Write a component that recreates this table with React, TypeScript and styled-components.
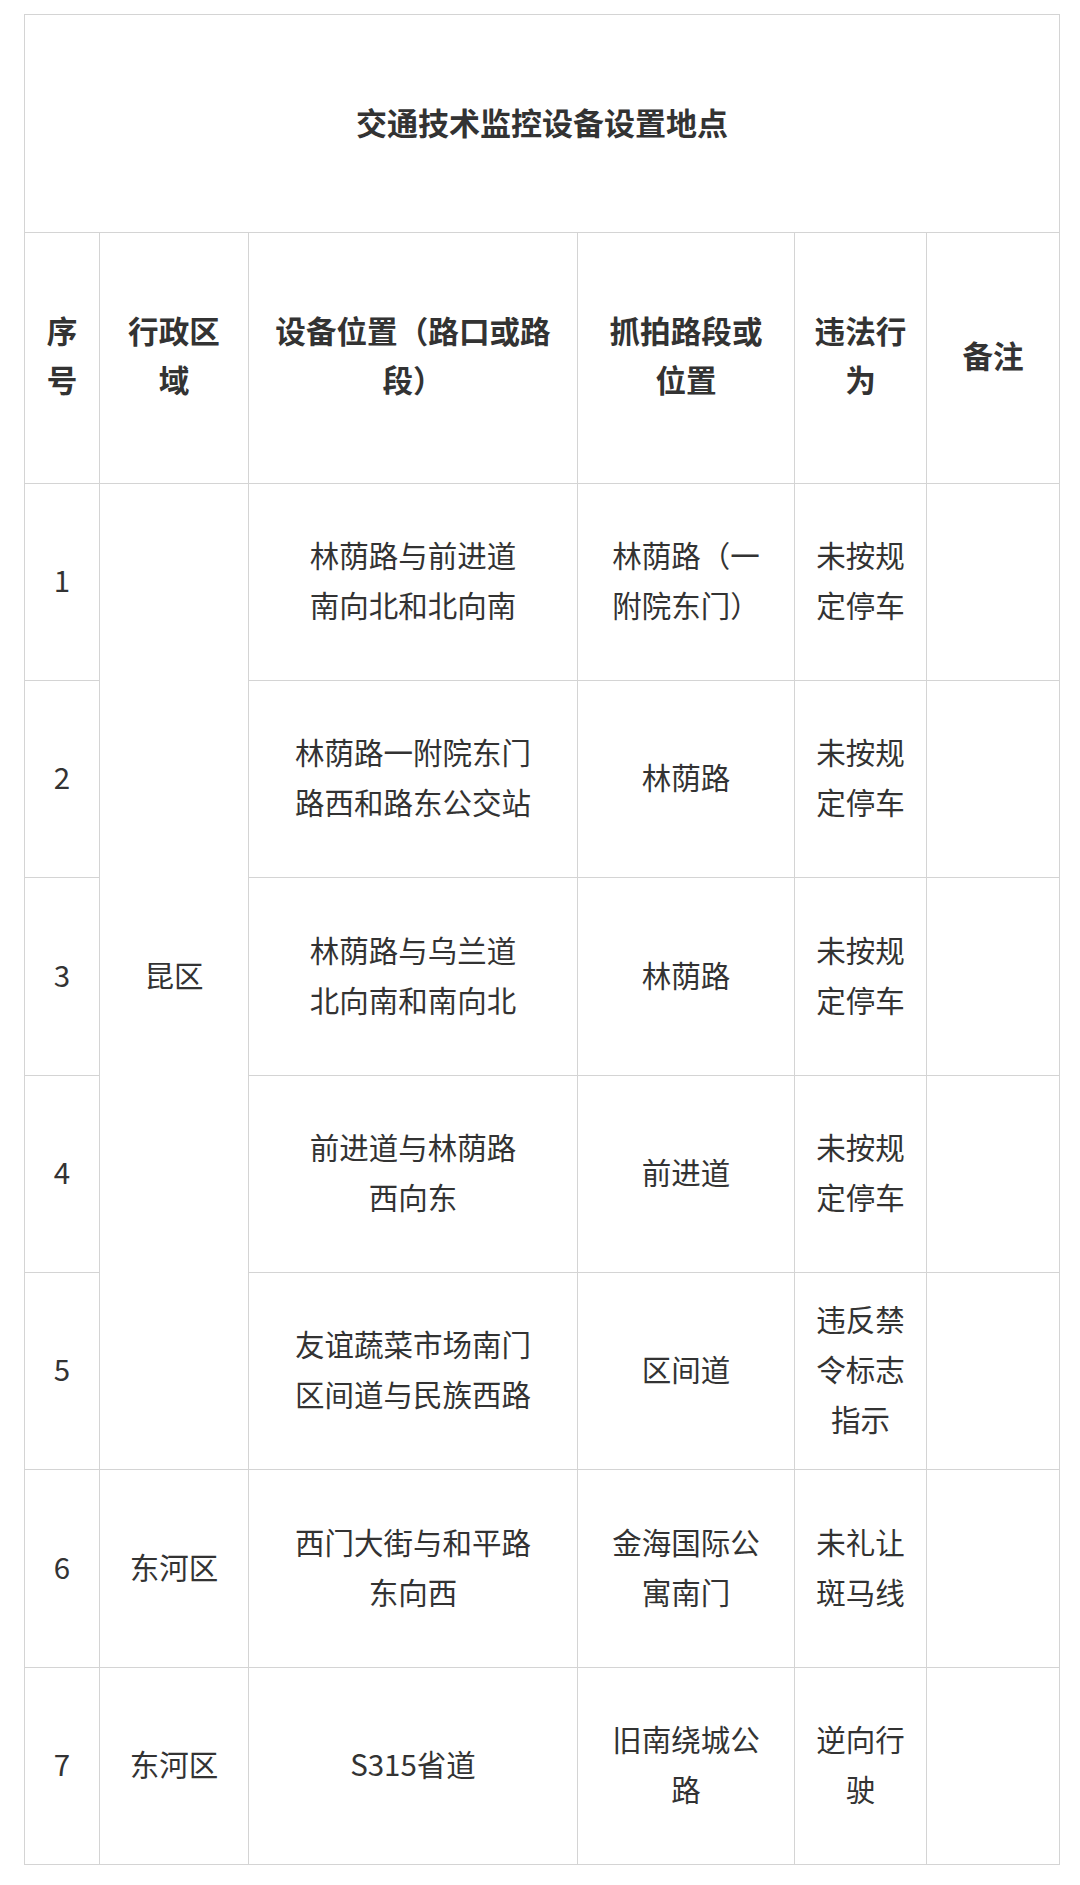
import React from 'react';
import styled, { createGlobalStyle } from 'styled-components';

const GlobalStyle = createGlobalStyle`
  html,
  body {
    margin: 0;
    padding: 0;
    background: #fff;
  }
  body {
    font-family: 'Noto Sans CJK SC', 'Noto Sans', sans-serif;
    color: #333;
  }
`;

const Page = styled.div`
  padding: 14px 0 20px 24px;
`;

const Sheet = styled.div`
  display: grid;
  box-sizing: border-box;
  width: 1036px;
  grid-template-columns: 74px 148px 328px 216px 131px 132px;
  grid-template-rows: 217px 250px 196px 196px 197px 196px 196px 197px 196px;
  gap: 1px;
  padding: 1px;
  background: #d4d4d4;
`;

const TitleCell = styled.div`
  grid-column: 1 / -1;
  background: #fff;
  display: flex;
  align-items: center;
  justify-content: center;
  padding-bottom: 4px;
  font-size: 31px;
  font-weight: 700;
  color: #333;
`;

const Cell = styled.div<{ $col: number; $span?: number }>`
  grid-column: ${(p) => p.$col};
  grid-row: span ${(p) => p.$span ?? 1};
  box-sizing: border-box;
  background: #fff;
  display: flex;
  align-items: center;
  justify-content: center;
  padding-bottom: 6px;
  text-align: center;
  white-space: nowrap;
  font-size: 29.5px;
  line-height: 50px;
  color: #333;
`;

const HeadCell = styled(Cell)`
  font-size: 30.6px;
  font-weight: 700;
  line-height: 49px;
`;

type Row = {
  no: string;
  area?: string;
  loc: string[];
  spot: string[];
  act: string[];
};

const headers = [['序', '号'], ['行政区', '域'], ['设备位置（路口或路', '段）'], ['抓拍路段或', '位置'], ['违法行', '为'], ['备注']];

const rows: Row[] = [
  { no: '1', loc: ['林荫路与前进道', '南向北和北向南'], spot: ['林荫路（一', '附院东门）'], act: ['未按规', '定停车'] },
  { no: '2', loc: ['林荫路一附院东门', '路西和路东公交站'], spot: ['林荫路'], act: ['未按规', '定停车'] },
  { no: '3', loc: ['林荫路与乌兰道', '北向南和南向北'], spot: ['林荫路'], act: ['未按规', '定停车'] },
  { no: '4', loc: ['前进道与林荫路', '西向东'], spot: ['前进道'], act: ['未按规', '定停车'] },
  { no: '5', loc: ['友谊蔬菜市场南门', '区间道与民族西路'], spot: ['区间道'], act: ['违反禁', '令标志', '指示'] },
  { no: '6', area: '东河区', loc: ['西门大街与和平路', '东向西'], spot: ['金海国际公', '寓南门'], act: ['未礼让', '斑马线'] },
  { no: '7', area: '东河区', loc: ['S315省道'], spot: ['旧南绕城公', '路'], act: ['逆向行', '驶'] },
];

function Lines({ items }: { items: string[] }) {
  return (
    <div>
      {items.map((t, i) => (
        <React.Fragment key={i}>
          {i > 0 && <br />}
          {t}
        </React.Fragment>
      ))}
    </div>
  );
}

function App() {
  return (
    <Page>
      <GlobalStyle />
      <Sheet>
        <TitleCell>交通技术监控设备设置地点</TitleCell>
        {headers.map((h, i) => (
          <HeadCell key={i} $col={i + 1}>
            <Lines items={h} />
          </HeadCell>
        ))}
        {rows.map((r, i) => (
          <React.Fragment key={r.no}>
            <Cell $col={1}>{r.no}</Cell>
            {i === 0 && (
              <Cell $col={2} $span={5}>
                昆区
              </Cell>
            )}
            {r.area && <Cell $col={2}>{r.area}</Cell>}
            <Cell $col={3}>
              <Lines items={r.loc} />
            </Cell>
            <Cell $col={4}>
              <Lines items={r.spot} />
            </Cell>
            <Cell $col={5}>
              <Lines items={r.act} />
            </Cell>
            <Cell $col={6} />
          </React.Fragment>
        ))}
      </Sheet>
    </Page>
  );
}

export default App;
